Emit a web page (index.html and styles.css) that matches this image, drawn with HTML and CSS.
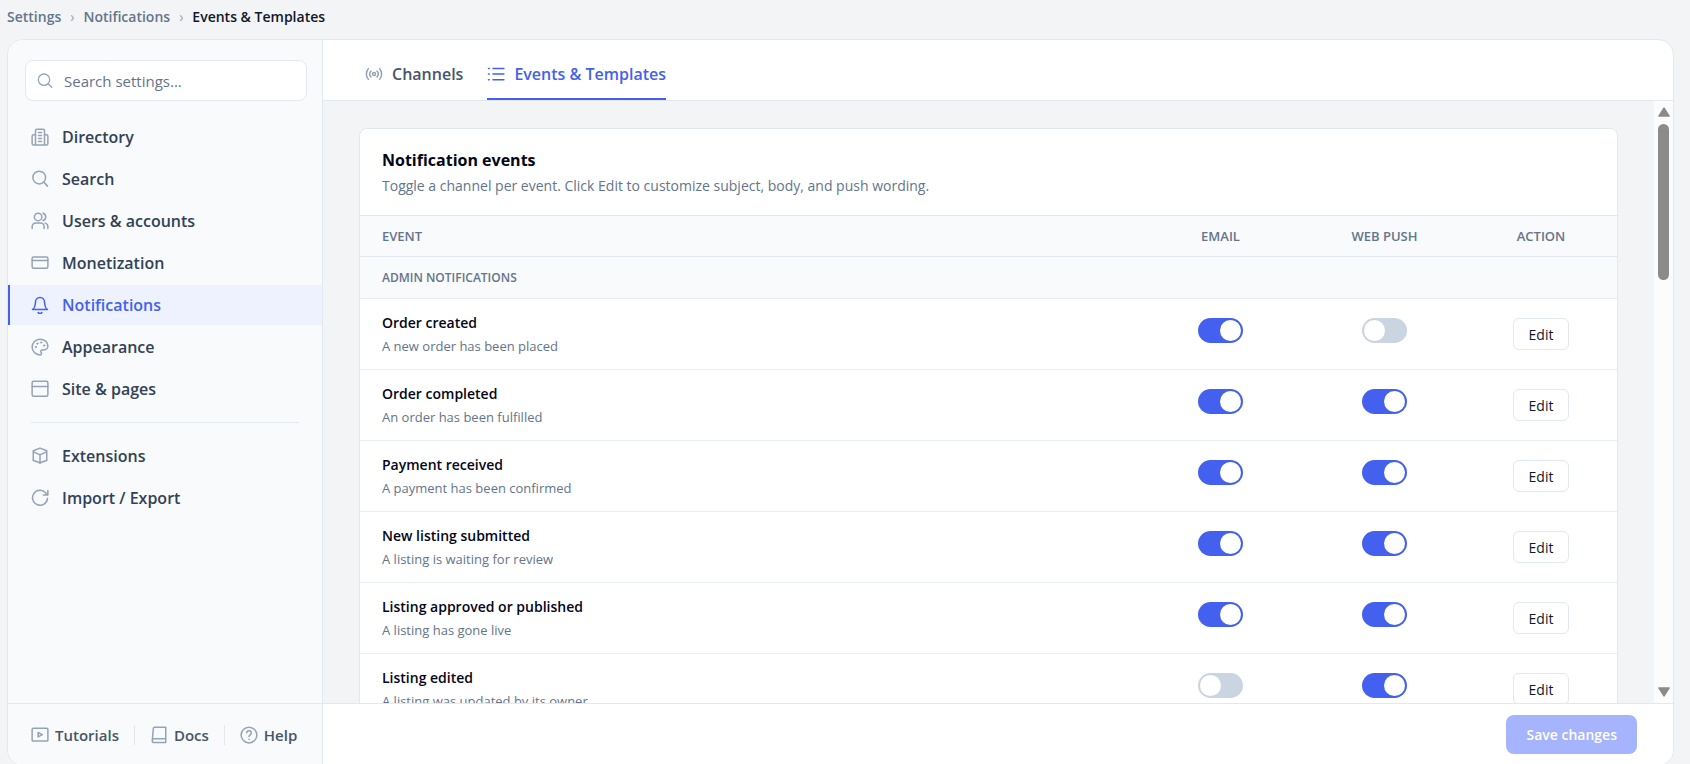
FILE: index.html
```html
<!DOCTYPE html>
<html lang="en">
<head>
    <meta charset="UTF-8">
    <meta name="viewport" content="width=device-width, initial-scale=1.0">
    <title>Settings - Events &amp; Templates</title>
    <link rel="stylesheet" href="styles.css">
</head>
<body>
    <nav class="breadcrumb" aria-label="Breadcrumb">
        <a href="#">Settings</a>
        <span class="sep">›</span>
        <a href="#">Notifications</a>
        <span class="sep">›</span>
        <span class="current">Events &amp; Templates</span>
    </nav>

    <div class="panel">
        <aside class="sidebar">
            <div class="search-box">
                <svg class="icon" viewBox="0 0 24 24"><circle cx="10.500" cy="10" r="8.500"/><path d="m22 21.500-5.500-5.500"/></svg>
                <input type="text" placeholder="Search settings..." aria-label="Search settings">
            </div>

            <nav class="side-nav">
                <a href="#">
                    <svg class="icon" viewBox="0 0 24 24"><path d="M6 22V3.500a2 2 0 0 1 2-2h8a2 2 0 0 1 2 2V22"/><path d="M6 9H3.500a2 2 0 0 0-2 2v9.500a2 2 0 0 0 2 2h17a2 2 0 0 0 2-2V11a2 2 0 0 0-2-2H18M10 6h4M10 10h4M10 14h4M10 18h4"/></svg>
                    Directory
                </a>
                <a href="#">
                    <svg class="icon" viewBox="0 0 24 24"><circle cx="11" cy="10" r="8.500"/><path d="m22 21.500-5-5.500"/></svg>
                    Search
                </a>
                <a href="#">
                    <svg class="icon" viewBox="0 0 24 24"><circle cx="9.500" cy="6.500" r="5"/><path d="M1.500 22v-2.500a5 5 0 0 1 5-5h6a5 5 0 0 1 5 5V22M16 1.700a5 5 0 0 1 0 9.600M22.500 22v-2.500a5 5 0 0 0-3.500-4.700"/></svg>
                    Users &amp; accounts
                </a>
                <a href="#">
                    <svg class="icon" viewBox="0 0 24 24"><rect x="1.500" y="4" width="21" height="15" rx="2"/><path d="M1.500 8.500h21"/></svg>
                    Monetization
                </a>
                <a href="#" class="active" aria-current="page">
                    <svg class="icon" viewBox="0 0 24 24"><path d="M2 18c2-1 3-3 3.500-6l.500-4a6 6 0 0 1 12 0l.500 4c.500 3 1.500 5 3.500 6Z"/><path d="M9.500 22a3 3 0 0 0 5 0"/></svg>
                    Notifications
                </a>
                <a href="#">
                    <svg class="icon" viewBox="0 0 24 24"><path d="M12 1.500a10.500 10.500 0 0 0 0 21c1.100 0 2-.900 2-2 0-.500-.200-.900-.500-1.300-.300-.400-.500-.800-.500-1.300 0-1.100.900-1.900 2-1.900h2.300c3 0 5.200-2.400 5.200-5.200C22.500 5.300 17.800 1.500 12 1.500Z"/><circle class="dot" cx="6.500" cy="12" r="1"/><circle class="dot" cx="8.500" cy="7.500" r="1"/><circle class="dot" cx="13.500" cy="6" r="1"/><circle class="dot" cx="17.500" cy="10" r="1"/></svg>
                    Appearance
                </a>
                <a href="#">
                    <svg class="icon" viewBox="0 0 24 24"><rect x="1.500" y="1.500" width="21" height="20" rx="2"/><path d="M1.500 8.500h21"/></svg>
                    Site &amp; pages
                </a>
                <hr>
                <a href="#">
                    <svg class="icon" viewBox="0 0 24 24"><path d="m12 1.500 9 3.500v13l-9 3-9-3V5Z"/><path d="m3.500 6.500 8.500 4 8.500-4M12 10.500V22"/></svg>
                    Extensions
                </a>
                <a href="#">
                    <svg class="icon" viewBox="0 0 24 24"><path d="M22 12.500a10 10 0 1 1-2.500-7.500l2.500 3M22.500 2v6h-6"/></svg>
                    Import / Export
                </a>
            </nav>

            <div class="side-footer">
                <a href="#">
                    <svg class="icon" viewBox="0 0 24 24"><rect x="1.500" y="3" width="21" height="17" rx="1.500"/><path d="m9.500 8.500 5.500 3-5.500 3Z"/></svg>
                    Tutorials
                </a>
                <a href="#">
                    <svg class="icon" viewBox="0 0 24 24"><path d="M6 1.500h15V22H5.500A2.500 2.500 0 0 1 3 19.500L4.500 3A1.500 1.500 0 0 1 6 1.500ZM3 19a2.500 2.500 0 0 1 2.500-2H21"/></svg>
                    Docs
                </a>
                <a href="#">
                    <svg class="icon" viewBox="0 0 24 24"><circle cx="12" cy="12" r="10.500"/><path d="M9 9a3 3 0 0 1 6 .500c0 2-3 2.500-3 4.500M12 17.500v.500"/></svg>
                    Help
                </a>
            </div>
        </aside>

        <main class="main">
            <nav class="tabs">
                <a href="#">
                    <svg class="icon" viewBox="0 0 24 24"><circle cx="12" cy="12" r="2"/><path d="M4.500 19a10.500 10.500 0 0 1 0-14M8 16a6 6 0 0 1 0-8M16 8a6 6 0 0 1 0 8M19.500 5a10.500 10.500 0 0 1 0 14"/></svg>
                    Channels
                </a>
                <a href="#" class="active" aria-current="page">
                    <svg class="icon" viewBox="0 0 24 24"><path d="M8 4.500h14.500M8 12h14.500M8 19.500h14.500M2 4.500h1M2 12h1M2 19.500h1"/></svg>
                    Events &amp; Templates
                </a>
            </nav>

            <div class="body-row">
                <div class="content">
                    <section class="card">
                        <header class="card-header">
                            <h2>Notification events</h2>
                            <p>Toggle a channel per event. Click Edit to customize subject, body, and push wording.</p>
                        </header>
                        <table class="events">
                            <thead>
                                <tr>
                                    <th scope="col">EVENT</th>
                                    <th scope="col" class="col-email">EMAIL</th>
                                    <th scope="col" class="col-push">WEB PUSH</th>
                                    <th scope="col" class="col-action">ACTION</th>
                                </tr>
                            </thead>
                            <tbody>
                                <tr class="group">
                                    <th colspan="4" scope="colgroup">ADMIN NOTIFICATIONS</th>
                                </tr>
                                <tr>
                                    <td><strong>Order created</strong><small>A new order has been placed</small></td>
                                    <td><input type="checkbox" class="toggle" aria-label="Order created: email" checked></td>
                                    <td><input type="checkbox" class="toggle" aria-label="Order created: web push"></td>
                                    <td><button type="button" class="btn-edit">Edit</button></td>
                                </tr>
                                <tr>
                                    <td><strong>Order completed</strong><small>An order has been fulfilled</small></td>
                                    <td><input type="checkbox" class="toggle" aria-label="Order completed: email" checked></td>
                                    <td><input type="checkbox" class="toggle" aria-label="Order completed: web push" checked></td>
                                    <td><button type="button" class="btn-edit">Edit</button></td>
                                </tr>
                                <tr>
                                    <td><strong>Payment received</strong><small>A payment has been confirmed</small></td>
                                    <td><input type="checkbox" class="toggle" aria-label="Payment received: email" checked></td>
                                    <td><input type="checkbox" class="toggle" aria-label="Payment received: web push" checked></td>
                                    <td><button type="button" class="btn-edit">Edit</button></td>
                                </tr>
                                <tr>
                                    <td><strong>New listing submitted</strong><small>A listing is waiting for review</small></td>
                                    <td><input type="checkbox" class="toggle" aria-label="New listing submitted: email" checked></td>
                                    <td><input type="checkbox" class="toggle" aria-label="New listing submitted: web push" checked></td>
                                    <td><button type="button" class="btn-edit">Edit</button></td>
                                </tr>
                                <tr>
                                    <td><strong>Listing approved or published</strong><small>A listing has gone live</small></td>
                                    <td><input type="checkbox" class="toggle" aria-label="Listing approved or published: email" checked></td>
                                    <td><input type="checkbox" class="toggle" aria-label="Listing approved or published: web push" checked></td>
                                    <td><button type="button" class="btn-edit">Edit</button></td>
                                </tr>
                                <tr>
                                    <td><strong>Listing edited</strong><small>A listing was updated by its owner</small></td>
                                    <td><input type="checkbox" class="toggle" aria-label="Listing edited: email"></td>
                                    <td><input type="checkbox" class="toggle" aria-label="Listing edited: web push" checked></td>
                                    <td><button type="button" class="btn-edit">Edit</button></td>
                                </tr>
                            </tbody>
                        </table>
                    </section>
                </div>
                <div class="scrollbar" aria-hidden="true">
                    <svg viewBox="0 0 12 10"><path d="M6 1.500 10.500 8.500h-9Z"/></svg>
                    <div class="track"><div class="thumb"></div></div>
                    <svg viewBox="0 0 12 10"><path d="M6 8.500 1.500 1.500h9Z"/></svg>
                </div>
            </div>

            <footer class="save-bar">
                <button type="button" class="btn-save" disabled>Save changes</button>
            </footer>
        </main>
    </div>
</body>
</html>
```

FILE: styles.css
```css
* {
    box-sizing: border-box;
}
body {
    margin: 0;
    height: 100vh;
    overflow: hidden;
    background: #f3f4f6;
    color: #0f172a;
    font-family: "Segoe UI", "Open Sans", "Noto Sans", sans-serif;
    font-size: 14px;
}
a {
    color: inherit;
    text-decoration: none;
}
.icon {
    width: 18px;
    height: 18px;
    flex: none;
    fill: none;
    stroke: #94a3b8;
    stroke-width: 2;
    stroke-linecap: round;
    stroke-linejoin: round;
}
.icon .dot {
    fill: #94a3b8;
    stroke-width: 1;
}

/* breadcrumb */
.breadcrumb {
    display: flex;
    align-items: center;
    gap: 9px;
    height: 39px;
    padding: 0 7px 6px;
    color: #64748b;
    font-weight: 600;
}
.breadcrumb .sep {
    color: #94a3b8;
    font-weight: 400;
}
.breadcrumb .current {
    color: #0f172a;
}

/* shell */
.panel {
    display: flex;
    height: calc(100vh - 37px);
    margin: 0 16px 0 7px;
    border: 1px solid #e2e8f0;
    border-radius: 16px;
    overflow: hidden;
    background: #fff;
}
.sidebar {
    display: flex;
    flex-direction: column;
    flex: none;
    width: 315px;
    border-right: 1px solid #e2e8f0;
    background: #f8fafc;
}
.search-box {
    display: flex;
    align-items: center;
    gap: 11px;
    height: 41px;
    margin: 20px 15px 16px 17px;
    padding: 0 11px;
    border: 1px solid #e2e8f0;
    border-radius: 8px;
    background: #fff;
}
.search-box .icon {
    width: 16px;
    height: 16px;
}
.search-box input {
    flex: 1;
    min-width: 0;
    padding: 0;
    border: 0;
    outline: 0;
    background: none;
    font: inherit;
    font-size: 15px;
}
.search-box input::placeholder {
    color: #64748b;
}
.side-nav {
    display: flex;
    flex-direction: column;
    flex: 1;
    gap: 2px;
}
.side-nav a {
    display: flex;
    align-items: center;
    gap: 13px;
    height: 40px;
    padding: 0 21px;
    border-left: 2px solid transparent;
    color: #334155;
    font-size: 16px;
    font-weight: 600;
}
.side-nav a.active {
    border-left-color: #4361ee;
    background: #eef2ff;
    color: #4361ee;
}
.active .icon {
    stroke: #4361ee;
}
.side-nav hr {
    width: calc(100% - 46px);
    margin: 11px 23px;
    border: 0;
    border-top: 1px solid #e2e8f0;
}
.side-footer {
    display: flex;
    align-items: center;
    height: 62px;
    padding: 0 8px;
    border-top: 1px solid #e2e8f0;
    color: #475569;
    font-size: 15px;
    font-weight: 600;
}
.side-footer a {
    display: flex;
    align-items: center;
    gap: 6px;
    padding: 0 15px;
}
.side-footer a + a {
    border-left: 1px solid #e2e8f0;
}

/* tabs */
.main {
    display: flex;
    flex-direction: column;
    flex: 1;
    min-width: 0;
}
.tabs {
    display: flex;
    gap: 24px;
    height: 61px;
    padding: 0 42px;
    border-bottom: 1px solid #e2e8f0;
}
.tabs a {
    display: flex;
    align-items: center;
    gap: 9px;
    padding-top: 9px;
    border-bottom: 2px solid transparent;
    color: #475569;
    font-size: 16px;
    font-weight: 600;
}
.tabs a.active {
    border-bottom-color: #4361ee;
    color: #4361ee;
}

/* content area */
.body-row {
    display: flex;
    flex: 1;
    min-height: 0;
    background: #f3f4f6;
}
.content {
    flex: 1;
    min-width: 0;
    overflow: hidden;
    padding: 27px 36px;
}
.card {
    border: 1px solid #e2e8f0;
    border-radius: 8px;
    overflow: hidden;
    background: #fff;
}
.card-header {
    padding: 19px 22px 18px;
}
.card-header h2 {
    margin: 0;
    color: #020617;
    font-size: 16px;
    font-weight: 700;
    line-height: 24px;
}
.card-header p {
    margin: 3px 0 0;
    color: #64748b;
    font-size: 14px;
    line-height: 22px;
}
.events {
    width: 100%;
    border-collapse: collapse;
    table-layout: fixed;
}
.events th,
.events td {
    padding: 0;
    text-align: center;
}
.events th {
    height: 41px;
    border-top: 1px solid #e2e8f0;
    background: #f8fafc;
    color: #64748b;
    font-size: 13px;
    font-weight: 600;
}
.events .group th {
    height: 42px;
    font-size: 12px;
}
.events th:first-child,
.events td:first-child {
    padding-left: 22px;
    text-align: left;
}
.events td {
    height: 71px;
    border-top: 1px solid #e9eef4;
}
.events strong,
.events small {
    display: block;
}
.events strong {
    color: #020617;
    font-size: 14px;
    font-weight: 600;
    line-height: 24px;
}
.events small {
    color: #64748b;
    font-size: 13px;
    line-height: 22px;
}
.col-email {
    width: 167px;
}
.col-push {
    width: 161px;
}
.col-action {
    width: 152px;
}
.toggle {
    display: inline-block;
    appearance: none;
    width: 45px;
    height: 25px;
    margin: 0 0 8px;
    padding: 2px;
    border-radius: 13px;
    background: #cbd5e1;
    vertical-align: middle;
    cursor: pointer;
}
.toggle::before {
    content: "";
    display: block;
    width: 21px;
    height: 21px;
    border-radius: 50%;
    background: #fff;
}
.toggle:checked {
    background: #4361ee;
}
.toggle:checked::before {
    margin-left: auto;
}
.btn-edit {
    height: 32px;
    padding: 0 15px;
    border: 1px solid #e2e8f0;
    border-radius: 6px;
    background: #fff;
    color: #0f172a;
    font: inherit;
    cursor: pointer;
}

/* scrollbar */
.scrollbar {
    display: flex;
    flex-direction: column;
    align-items: center;
    flex: none;
    width: 19px;
    padding: 5px 0;
    background: #fcfcfd;
}
.scrollbar svg {
    width: 14px;
    height: 12px;
    fill: #8b8b8b;
    stroke: #8b8b8b;
    stroke-linejoin: round;
}
.track {
    flex: 1;
    width: 11px;
    padding: 6px 0;
}
.thumb {
    height: 28%;
    border-radius: 6px;
    background: #8b8b8b;
}

/* save bar */
.save-bar {
    display: flex;
    align-items: center;
    justify-content: flex-end;
    height: 62px;
    padding: 0 36px;
    border-top: 1px solid #e2e8f0;
    background: #fff;
}
.btn-save {
    height: 39px;
    padding: 0 20px;
    border: 0;
    border-radius: 8px;
    background: #a5b4fc;
    color: #fff;
    font: inherit;
    font-weight: 600;
}
```
